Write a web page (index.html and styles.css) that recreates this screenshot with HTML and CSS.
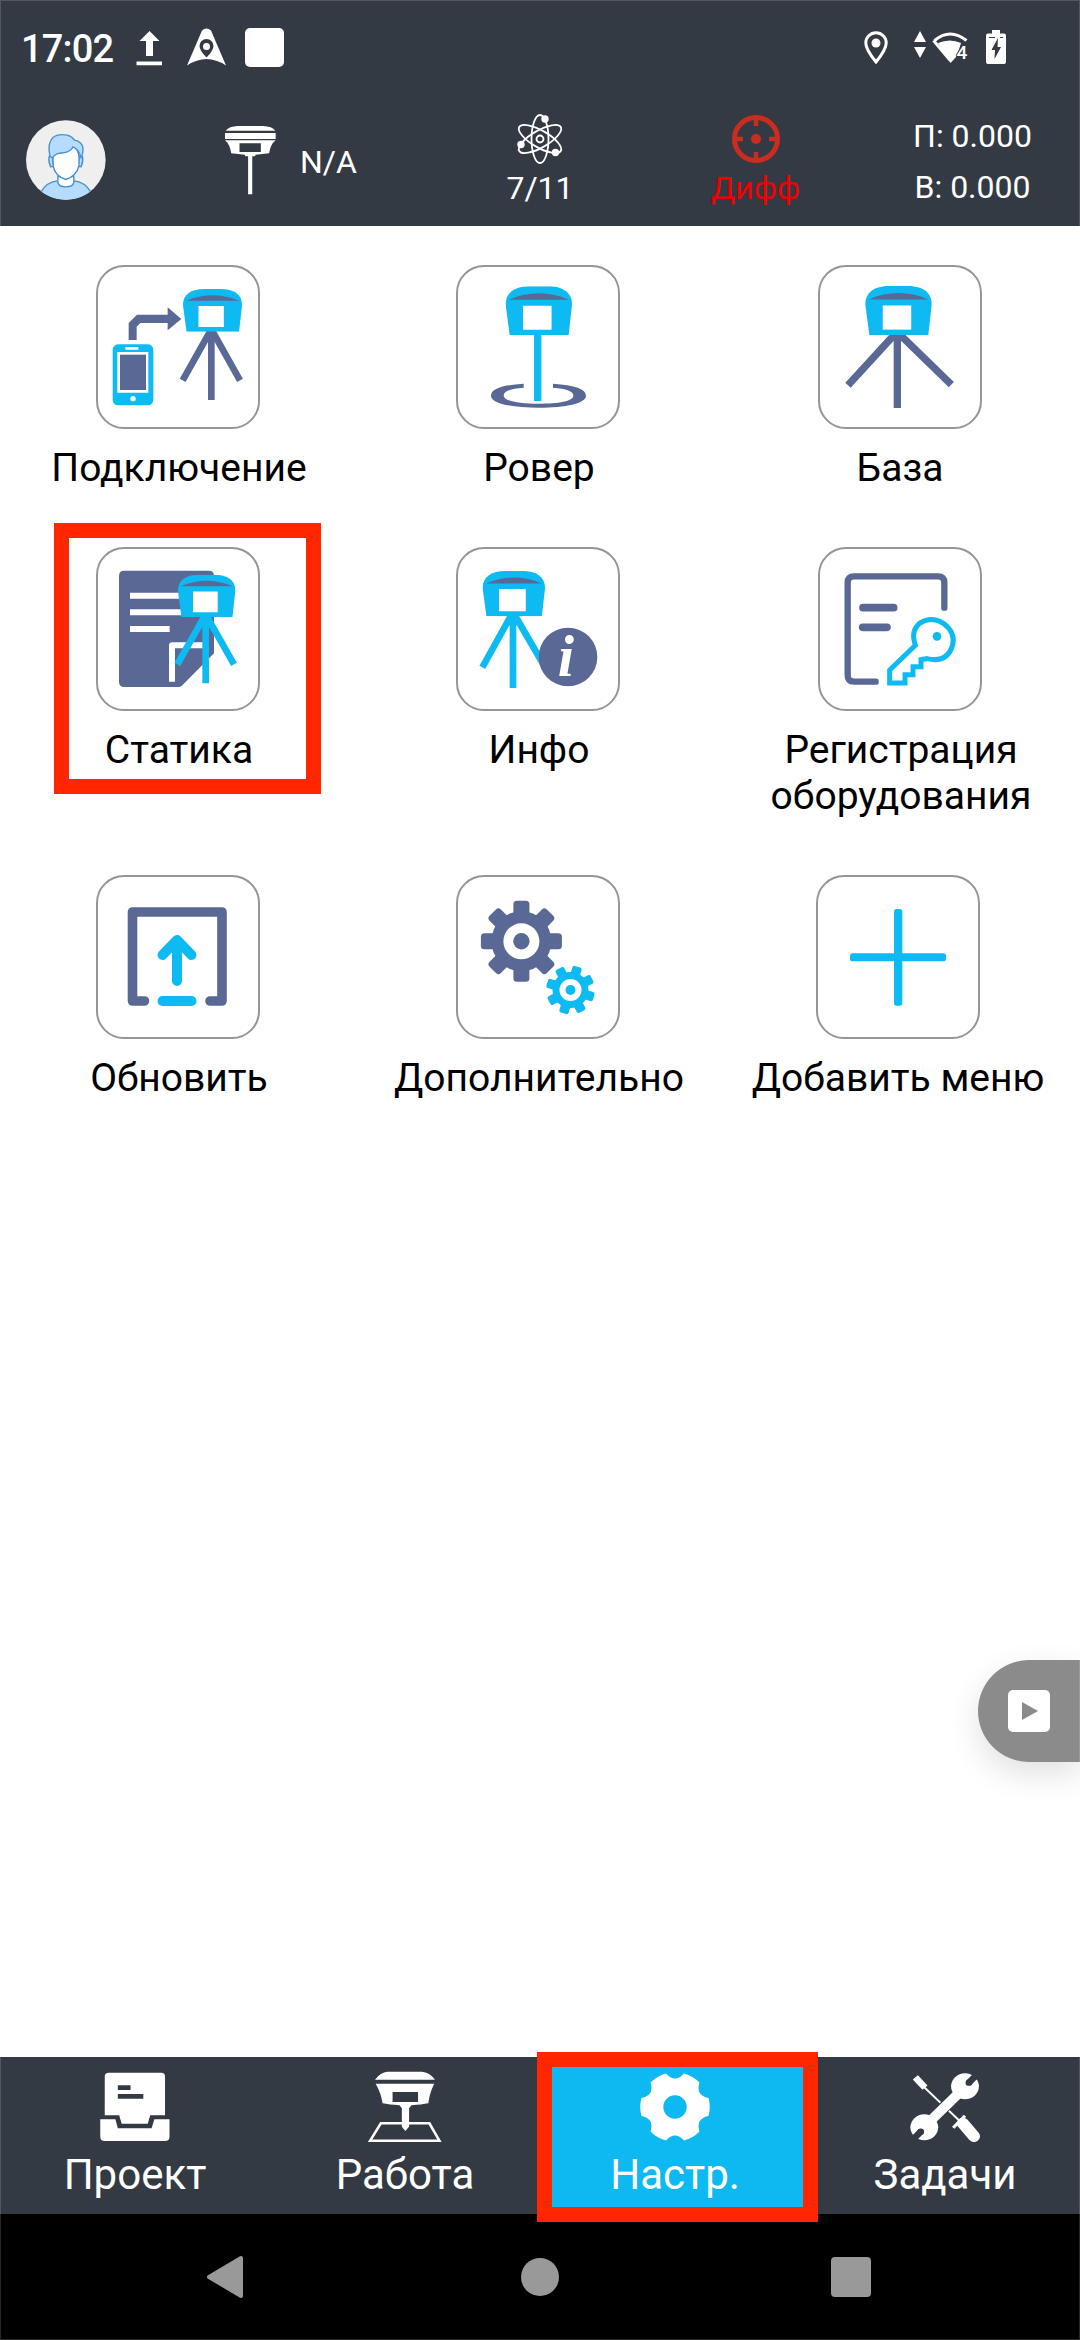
FILE: index.html
```html
<!DOCTYPE html>
<html lang="ru">
<head>
<meta charset="utf-8">
<title>Настройки</title>
<link rel="stylesheet" href="styles.css">
</head>
<body>
<svg class="defs" width="0" height="0" aria-hidden="true">
  <symbol id="head" viewBox="0 0 200 146" preserveAspectRatio="none">
    <path class="c" d="M1 56C0 18 30 0 72 0H128C170 0 200 18 199 56L189 146H13Z"/>
    <path class="s" d="M11 40Q100 2 189 40Z"/>
    <path class="w" d="M53 58H138V130H53Z"/>
  </symbol>
</svg>
<div class="screen">
  <header class="header">
    <div class="status">
      <div class="status-left">
        <span class="clock">17:02</span>
        <svg class="up" width="26" height="35" viewBox="136 31 26 35"><path class="w" d="M149.500 31L159.500 41H153V56H146V41H139.500ZM136.500 61.500H162V65.300H136.500Z"/></svg>
        <svg class="nav-a" width="40" height="38" viewBox="187 28.500 40 38"><path class="w" fill-rule="evenodd" d="M202 31Q206.500 27 211 31L226 66Q206.500 53 187 66ZM206.500 58Q213.500 51 213.500 46.500A7 7 0 0 0 199.500 46.500Q199.500 51 206.500 58ZM206.500 43.500A3.500 3.500 0 1 1 206.500 50.500A3.500 3.500 0 1 1 206.500 43.500Z"/></svg>
        <span class="square"></span>
      </div>
      <div class="status-right">
        <svg class="pin" width="24" height="34" viewBox="863.500 30.500 24 34"><path d="M875.500 61.500Q865.300 49 865.300 42.500A10.200 10.200 0 0 1 885.700 42.500Q885.700 49 875.500 61.500Z" fill="none" stroke="#fff" stroke-width="3"/><circle class="w" cx="875.500" cy="42.500" r="4.500"/></svg>
        <svg class="wifi" width="56" height="34" viewBox="913 29 56 34"><path class="w" d="M920 30L926 41H914ZM914 46H926L920 57Z"/><path d="M934.500 39.500Q950 26.500 966.500 39.500" fill="none" stroke="#fff" stroke-width="3"/><path d="M933.500 39.500L950.300 59.500" stroke="#fff" stroke-width="3"/><path class="w" d="M938 42Q950 37 961 42L957 55L950.500 62Z"/><text x="956.500" y="57.500" class="gen">4</text></svg>
        <svg width="20" height="34" viewBox="986 30 20 34"><path class="w" d="M992 30H1000V33.500H1004Q1006 33.500 1006 35.500V62Q1006 64 1004 64H988Q986 64 986 62V35.500Q986 33.500 988 33.500H992Z"/><path class="d" d="M998 38L991.500 50H995L994.500 59L1001 47H997.500ZM989 37H995V38H989ZM1000 37H1003V38H1000Z"/></svg>
      </div>
    </div>
    <div class="toolbar">
      <div class="avatar"><svg width="80" height="80" viewBox="75 362 231 238" preserveAspectRatio="none"><ellipse cx="190" cy="481" rx="115" ry="118.500" fill="#efefef"/><g fill="#b5dcff" stroke="#4a90d0" stroke-width="4"><path d="M119 575Q135 545 167 544H213Q248 546 261 575Q230 599 190 599T119 575Z" stroke="none"/><path d="M119 575Q135 546 167 543M261 575Q245 546 213 543" fill="none"/><path d="M142 470Q139 485 146 501L155 500L151 470ZM238 470Q241 485 234 501L225 500L229 470Z"/><path d="M167 530V548Q170 561 190 561T213 548V530Z" fill="#fff"/><path d="M152 462Q160 461 190 458Q205 452 212 442Q227 450 228 472V498Q222 528 190 539Q158 528 154 500Z" fill="#fff"/><path d="M144 470Q136 430 153 414Q167 402 194 407Q208 411 215 422Q233 424 239 442Q241 462 234 474Q226 446 210 442Q205 456 185 459Q157 460 152 475Z"/></g></svg></div>
      <div class="device">
        <svg width="52" height="72" viewBox="650 372 151 216" preserveAspectRatio="none"><path class="w" fill-rule="evenodd" d="M655 392Q665 379 690 378H763Q790 379 799 392ZM653 399H800V417H653ZM653 421H800Q785 433 781 460L742 464L740 469H732V583H720V469H712L710 464L671 460Q667 433 653 421ZM695 430V456H757V430Z"/></svg>
        <span>N/A</span>
      </div>
      <div class="stack">
        <svg width="52" height="52" viewBox="513.500 112.500 52 52"><g fill="none" stroke="#fff" stroke-width="1.800" transform="translate(539.500 138.500)"><ellipse rx="8.500" ry="24"/><ellipse rx="8.500" ry="24" transform="rotate(60)"/><ellipse rx="8.500" ry="24" transform="rotate(-60)"/><circle r="3.500"/></g><circle class="w" cx="520.500" cy="144" r="3.700"/><circle class="w" cx="544.500" cy="118.500" r="3.700"/><circle class="w" cx="555" cy="152" r="3.700"/></svg>
        <span>7/11</span>
      </div>
      <div class="stack diff">
        <svg width="52" height="52" viewBox="-26 -26 52 52"><g fill="none" stroke="#cb2c20"><circle r="21.500" stroke-width="5"/><path d="M0 -22V-13M0 22V13M-22 0H-13M22 0H13" stroke-width="4.400"/></g><circle r="5" fill="#cb2c20"/></svg>
        <span>Дифф</span>
      </div>
      <div class="precision"><span>П: 0.000</span><span>В: 0.000</span></div>
    </div>
  </header>

  <main class="content">
    <div class="grid">
      <div class="item shift">
        <div class="tile"><svg viewBox="204 51 480 480"><path class="leg" d="M540 245L458 391M548 245L630 391"/><path class="leg" d="M544 240V450"/><use href="#head" x="458" y="117" width="179" height="128"/><path class="s" d="M296 270V219L321 194H413V172L454 207L413 241V219H331L320 230V270Z"/><rect class="c" x="248" y="283" width="122" height="183" rx="16"/><path class="w" d="M262 306H355V428H262ZM286 291H325V299H286Z"/><path class="s" d="M270 314H348V420H270Z"/><circle class="w" cx="309" cy="446" r="8"/></svg></div>
        <span class="label">Подключение</span>
      </div>
      <div class="item shift">
        <div class="tile"><svg viewBox="204 51 480 480"><path class="s" fill-rule="evenodd" d="M401 401Q303 407 303 437C303 460 365 473 446 473S588 460 588 437Q588 407 489 401V413Q550 417 550 437C550 453 505 461 446 461S341 453 341 437Q341 417 401 413Z"/><path class="c" d="M432 250H454V453H432Z"/><use href="#head" x="346" y="109" width="201" height="146"/></svg></div>
        <span class="label">Ровер</span>
      </div>
      <div class="item">
        <div class="tile"><svg viewBox="240 51 480 480"><path class="leg wide" d="M467 250L324 406M476 250L634 404M472 250V474"/><use href="#head" x="375" y="108" width="201" height="147"/></svg></div>
        <span class="label">База</span>
      </div>
      <div class="item shift">
        <div class="tile"><svg viewBox="204 117 480 480"><path class="s" d="M283 182H536Q552 182 552 198V430L457 526Q453 531 446 531H283Q267 531 267 515V198Q267 182 283 182Z"/><path d="M300 257H450M300 307H455M300 357H419M426 515V406H520" fill="none" stroke="#fff" stroke-width="18" stroke-linejoin="round"/><path class="leg cyan" d="M523 320L442 463M531 320L612 463M527 315V520"/><use href="#head" x="443" y="194" width="174" height="127"/></svg></div>
        <span class="label">Статика</span>
        <div class="mark mark-item"></div>
      </div>
      <div class="item shift">
        <div class="tile"><svg viewBox="204 57 480 480"><path class="leg cyan" d="M364 255L277 412M374 255L470 420M369 255V474"/><use href="#head" x="277" y="123" width="189" height="136"/><circle class="s" cx="534" cy="381" r="88"/><text class="info" x="503" y="437">i</text></svg></div>
        <span class="label">Инфо</span>
      </div>
      <div class="item">
        <div class="tile"><svg viewBox="240 57 480 480"><g fill="none" stroke="#5a6896" stroke-width="19" stroke-linecap="round"><path d="M407 455H342Q323 455 323 436V158Q323 139 342 139H594Q613 139 613 158V233"/><path d="M369 233H461M368 292H441" stroke-width="23"/></g><path d="M449 459V420L526 346Q511 302 540 279Q574 258 610 280Q647 308 638 345Q622 400 561 386L543 389V410H519V434H495V459Z" fill="none" stroke="#0dbbf2" stroke-width="15"/><circle class="c" cx="591" cy="319" r="13"/></svg></div>
        <span class="label wide-label">Регистрация<br>оборудования</span>
      </div>
      <div class="item shift">
        <div class="tile"><svg viewBox="0 0 160 160"><path d="M46.500 124H34.500V35H124V124H112" fill="none" stroke="#5a6896" stroke-width="9.600" stroke-linecap="round" stroke-linejoin="round"/><path d="M79 104V64M64.500 78L79 63L93.500 78M64.500 124H93.500" fill="none" stroke="#0dbbf2" stroke-width="10" stroke-linecap="round" stroke-linejoin="round"/></svg></div>
        <span class="label">Обновить</span>
      </div>
      <div class="item shift">
        <div class="tile"><svg viewBox="0 0 160 160"><g class="s" transform="translate(63.400 64.300)"><circle r="30"/><g id="teeth"><rect x="-8" y="-40.500" width="16" height="81" rx="3.500"/><rect x="-40.500" y="-8" width="81" height="16" rx="3.500"/></g><use href="#teeth" transform="rotate(45)"/><circle class="w" r="18"/><circle r="8.200"/></g><g class="c" transform="translate(112.500 113)"><circle r="18"/><g transform="rotate(17) scale(.6)"><use href="#teeth"/><use href="#teeth" transform="rotate(45)"/></g><circle class="w" r="11"/><circle r="5"/></g></svg></div>
        <span class="label">Дополнительно</span>
      </div>
      <div class="item add">
        <div class="tile"><svg viewBox="234 51 480 480"><rect class="c" x="330" y="280" width="288" height="24" rx="8"/><rect class="c" x="462" y="147" width="25" height="290" rx="8"/></svg></div>
        <span class="label">Добавить меню</span>
      </div>
    </div>
    <div class="float"><svg width="42" height="42" viewBox="0 0 42 42"><rect class="w" width="42" height="42" rx="5"/><path d="M14 12L30 21L14 30Z" fill="#8b8b8b"/></svg></div>
  </main>

  <nav class="tabs">
    <div class="tab"><svg width="80" height="76" viewBox="276.700 87 232.300 228" preserveAspectRatio="none"><path class="w" d="M317 98H469Q480 98 480 109V226H437L430 251H354L347 226H305V109Q305 98 317 98ZM292 238H336L343 265H441L449 238H493V290Q493 303 480 303H305Q292 303 292 290Z"/><path class="d" d="M343 136H380V150H343ZM343 162H417V176H343Z"/></svg><span>Проект</span></div>
    <div class="tab"><svg width="80" height="76" viewBox="1060 87 232.300 228" preserveAspectRatio="none"><path d="M1106 250H1247L1276 302H1075Z" fill="none" stroke="#fff" stroke-width="7.500"/><path class="w" d="M1089 119Q1105 96 1125 95H1225Q1248 97 1263 119ZM1091 131H1261Q1247 160 1244 190Q1225 194 1195 196L1188 205V260L1177 273L1167 260V205L1160 196Q1130 194 1111 190Q1107 160 1091 131Z"/><path class="d" d="M1140 156H1214V186H1140Z"/></svg><span>Работа</span></div>
    <div class="tab active"><svg width="80" height="76" viewBox="-40 -38 80 76"><path class="w" fill-rule="evenodd" d="M33.500 -9Q36 0 33.500 9Q20.400 11.800 24.500 24.500Q18 31.200 9 33.500Q0 23.500 -9 33.500Q-18 31.200 -24.500 24.500Q-20.400 11.800 -33.500 9Q-36 0 -33.500 -9Q-20.400 -11.800 -24.500 -24.500Q-18 -31.200 -9 -33.500Q0 -23.500 9 -33.500Q18 -31.200 24.500 -24.500Q20.400 -11.800 33.500 -9ZM0 -11.700A11.700 11.700 0 1 0 0 11.700A11.700 11.700 0 1 0 0 -11.700Z"/></svg><span>Настр.</span><div class="mark mark-tab"></div></div>
    <div class="tab"><svg width="80" height="76" viewBox="1078 87 224 228" preserveAspectRatio="none"><g fill="none" stroke="#fff"><path d="M1130 140L1236 248" stroke-width="6"/><path d="M1107 112L1134 143" stroke-width="19"/><path d="M1240 250L1271 289" stroke-width="34" stroke-linecap="round"/><path d="M1213 263L1246 227" stroke-width="9"/></g><path d="M1155 240L1222 162" stroke="#343a43" stroke-width="34"/><path d="M1140 252L1238 150" stroke="#fff" stroke-width="29"/><circle class="w" cx="1246" cy="139" r="39"/><circle class="w" cx="1132" cy="262" r="39"/><path d="M1257 128L1288 95M1122 275L1092 308" stroke="#343a43" stroke-width="19"/><circle class="d" cx="1257" cy="128" r="9.500"/><circle class="d" cx="1122" cy="275" r="9.500"/></svg><span>Задачи</span></div>
  </nav>
  <footer class="system">
    <svg width="40" height="44" viewBox="0 0 40 44"><path d="M4 22L36 3V41Z" fill="#999" stroke="#999" stroke-width="4" stroke-linejoin="round"/></svg>
    <span class="home"></span>
    <span class="recent"></span>
  </footer>
</div>
</body>
</html>
```
FILE: styles.css
```css
* { box-sizing: border-box; }
body { margin: 0; background: #fff; font-family: Roboto, "Noto Sans", sans-serif; color: #000; }
svg { display: block; flex: none; }
.defs { position: absolute; }
.c { fill: #0dbbf2; }
.s { fill: #5a6896; }
.w { fill: #fff; }
.d { fill: #343a43; }
.screen { position: relative; width: 1080px; height: 2340px; display: flex; flex-direction: column; overflow: hidden; }
.screen::after { content: ""; position: absolute; inset: 0; border: 1px solid rgba(255, 255, 255, .15); pointer-events: none; }

.header { height: 226px; background: #343a43; color: #fff; display: flex; flex-direction: column; }
.status { height: 94px; padding: 0 74px 0 22px; display: flex; justify-content: space-between; }
.status-left, .status-right { display: flex; align-items: flex-start; }
.clock { width: 114px; padding-top: 27px; font-size: 38px; font-weight: 500; line-height: 45px; letter-spacing: -.8px; text-indent: -1px; }
.up { margin-top: 31px; }
.nav-a { margin: 28px 0 0 25px; }
.square { width: 39px; height: 39px; margin: 28px 0 0 18px; background: #fff; border-radius: 5px; }
.status-right { padding-top: 30px; }
.pin { margin: 1px 25px 0 0; }
.wifi { margin: 0 17px 0 0; }
.gen { font-size: 19px; font-weight: 500; fill: #fff; stroke: #343a43; stroke-width: 2px; paint-order: stroke; }

.toolbar { flex: 1; display: grid; grid-template-columns: 180px 250px 220px 211px 219px; font-size: 32px; line-height: 38px; }
.avatar { padding: 26px 0 0 26px; }
.device { display: flex; padding: 30px 0 0 44px; }
.device span { padding: 19px 0 0 24px; }
.stack { display: flex; flex-direction: column; align-items: center; gap: 4px; padding-top: 19px; }
.diff { color: #f00000; }
.precision { display: flex; flex-direction: column; align-items: center; padding: 17px 0 0 4px; line-height: 51px; }

.content { flex: 1; padding-top: 39px; position: relative; }
.grid { display: grid; grid-template-columns: repeat(3, 360px); row-gap: 56px; }
.item { position: relative; display: flex; flex-direction: column; align-items: center; gap: 16px; }
.tile { width: 164px; height: 164px; border: 2px solid #969696; border-radius: 28px; }
.shift .tile { margin-right: 4px; }
.shift .label { margin-right: 2px; }
.add { padding-right: 4px; }
.label { font-size: 39px; line-height: 46px; text-align: center; white-space: nowrap; }
.wide-label { padding-left: 2px; }
.leg { fill: none; stroke: #5a6896; stroke-width: 20px; }
.leg.wide { stroke-width: 22px; }
.leg.cyan { stroke: #0dbbf2; }
.info { font: italic bold 176px "Liberation Serif", serif; fill: #fff; }

.mark { position: absolute; border: 15px solid #ff2600; }
.mark-item { left: 54px; top: -24px; width: 267px; height: 271px; }
.mark-tab { left: -3px; top: -5px; width: 281px; height: 170px; }

.float { position: absolute; right: 0; top: 1434px; width: 102px; height: 102px; padding: 30px 0 0 30px; background: #8b8b8b; border-radius: 51px 0 0 51px; box-shadow: 0 12px 32px rgba(0, 0, 0, .12); }

.tabs { height: 157px; display: grid; grid-template-columns: repeat(4, 270px); background: #343a43; color: #fff; }
.tab { position: relative; display: flex; flex-direction: column; align-items: center; padding-top: 12px; font-size: 42px; line-height: 50px; }
.tab span { padding-top: 5px; }
.active { background: #0db9f0; }
.system { height: 126px; background: #000; display: flex; align-items: center; justify-content: space-between; padding: 0 209px 0 205px; }
.home { width: 38px; height: 38px; margin-left: 4px; border-radius: 50%; background: #999; }
.recent { width: 40px; height: 40px; border-radius: 4px; background: #999; }
```
